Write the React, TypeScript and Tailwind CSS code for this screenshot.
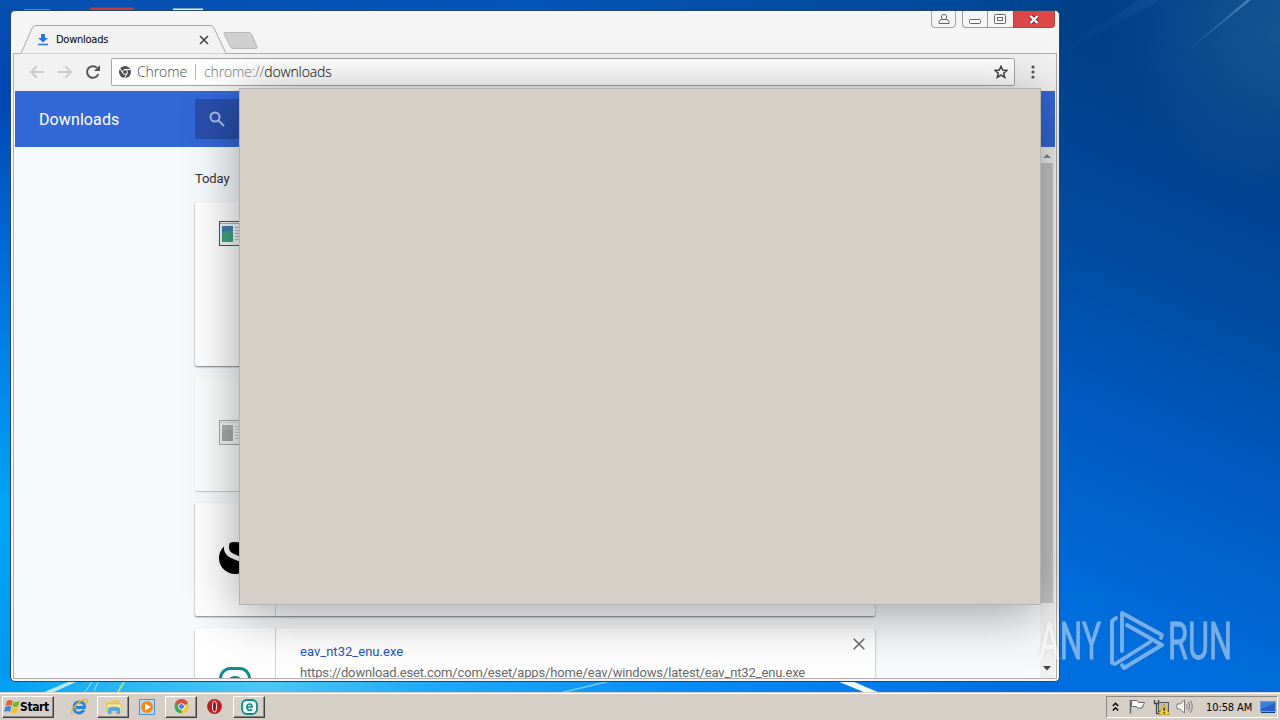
import type { ReactNode } from 'react';

/** Desktop wallpaper: blue gradients with a few light streaks */
function Wallpaper() {
  return (
    <svg className="absolute inset-0" width="1280" height="720" viewBox="0 0 1280 720">
      <defs>
        <linearGradient id="left" x1="0" y1="0" x2="0" y2="1">
          <stop offset="0" stopColor="#064fb0" />
          <stop offset="0.13" stopColor="#0046b2" />
          <stop offset="0.4" stopColor="#0073dc" />
          <stop offset="0.7" stopColor="#00a4f6" />
          <stop offset="1" stopColor="#0098f0" />
        </linearGradient>
        <linearGradient id="right" gradientUnits="userSpaceOnUse" x1="1050" y1="620" x2="1260" y2="130">
          <stop offset="0" stopColor="#006fe0" />
          <stop offset="0.35" stopColor="#005cc4" />
          <stop offset="0.7" stopColor="#004a9f" />
          <stop offset="1" stopColor="#004088" />
        </linearGradient>
        <linearGradient id="top" x1="0" y1="0" x2="1" y2="0">
          <stop offset="0" stopColor="#064fb0" />
          <stop offset="0.5" stopColor="#0455b8" />
          <stop offset="1" stopColor="#004490" />
        </linearGradient>
        <linearGradient id="bottom" x1="0" y1="0" x2="1" y2="0">
          <stop offset="0" stopColor="#009ff2" />
          <stop offset="0.12" stopColor="#2bb8f4" />
          <stop offset="0.25" stopColor="#4cc6f6" />
          <stop offset="0.4" stopColor="#1fabf8" />
          <stop offset="0.65" stopColor="#078cf6" />
          <stop offset="1" stopColor="#006bdf" />
        </linearGradient>
        <radialGradient id="haze" gradientUnits="userSpaceOnUse" cx="1280" cy="30" r="170">
          <stop offset="0" stopColor="#24619a" stopOpacity="0.6" />
          <stop offset="1" stopColor="#24619a" stopOpacity="0" />
        </radialGradient>
        <linearGradient id="streak" x1="1" y1="0" x2="0" y2="1">
          <stop offset="0" stopColor="#4f86bd" stopOpacity="0.9" />
          <stop offset="1" stopColor="#4f86bd" stopOpacity="0" />
        </linearGradient>
      </defs>
      <rect width="1280" height="720" fill="url(#right)" />
      <rect width="1059" height="30" fill="url(#top)" />
      <rect width="20" height="720" fill="url(#left)" />
      <rect y="681" width="1059" height="39" fill="url(#bottom)" />
      <rect x="1060" width="220" height="220" fill="url(#haze)" />
      <path d="M1249 -2 L1176 60 L1251 0Z" fill="url(#streak)" />
      <path d="M1140 0 L1062 48 V54 L1160 0Z" fill="url(#streak)" opacity="0.15" />
      <path d="M44 692 L68 682 H76 L54 692Z" fill="#b9e8f8" />
      <path d="M85 692 L92 682 M94 691 L98 682" stroke="#a9e2f8" />
      <path d="M118 692 L124 682" stroke="#a5e08c" strokeWidth="2" />
      <path d="M560 693 L610 681" stroke="#6ecbfc" strokeWidth="1.5" />
      <path d="M837 681 H852 L880 693 H866Z" fill="#eefaff" />
      <path d="M24 9.500H50" stroke="#5483c6" />
      <path d="M90 9H134" stroke="#c33b35" strokeWidth="3" />
      <path d="M173 9.500H203" stroke="#e6eef8" strokeWidth="2" />
    </svg>
  );
}

function ChromeTab() {
  return (
    <div className="relative z-10 ml-[10px] mt-[14px] h-[29px] w-[206px]">
      <svg className="absolute inset-0" width="206" height="29" viewBox="0 0 206 29">
        <path d="M0 28.500L11 3.500Q12 .5 15 .5H190Q192 .5 193 3L205 28.500Z" fill="#f2f2f2" />
        <path d="M0 28.500L11 3.500Q12 .5 15 .5H190Q192 .5 193 3L205 28.500" fill="none" stroke="#a8a8a8" />
      </svg>
      <div className="relative flex h-full items-center pl-[16px] pr-[18px]">
        <svg className="mt-[-1px]" width="12" height="13" viewBox="0 0 12 13">
          <path d="M4 1H8V5H11L6 9.500L1 5H4Z" fill="#2f72e4" />
          <path d="M1 11.500H11" stroke="#2f72e4" strokeWidth="1.500" />
        </svg>
        <span className="ml-[7px] font-['DejaVu_Sans_Condensed','DejaVu_Sans',sans-serif] text-[11px] leading-none tracking-[-0.25px] text-black">
          Downloads
        </span>
        <svg className="ml-auto mt-px" width="10" height="10" viewBox="0 0 10 10">
          <path d="M1 1L9 9M9 1L1 9" stroke="#444" strokeWidth="1.600" />
        </svg>
      </div>
    </div>
  );
}

function WindowControls() {
  return (
    <div className="mr-[4px] ml-auto flex h-[17px]">
      <div className="mr-[6px] flex w-[25px] items-center justify-center rounded-b border border-t-0 border-[#a6a6a6]">
        <svg width="12" height="12" viewBox="0 0 12 12" fill="#fff" stroke="#666">
          <path d="M1 10.500V8.500Q1.500 6.500 4 6.500H8Q10.500 6.500 11 8.500V10.500Z" />
          <circle cx="6" cy="4" r="2.600" />
        </svg>
      </div>
      <div className="flex w-[51px] rounded-bl border border-t-0 border-r-0 border-[#999]">
        <div className="flex w-[25px] items-center justify-center border-r border-[#999] pt-[5px]">
          <svg width="12" height="5" viewBox="0 0 12 5">
            <rect x=".5" y=".5" width="11" height="4" rx="1" fill="#fff" stroke="#666" />
          </svg>
        </div>
        <div className="flex flex-1 items-center justify-center pr-px">
          <svg width="12" height="10" viewBox="0 0 12 10" fill="#fff" stroke="#666">
            <rect x=".5" y=".5" width="11" height="9" rx="1" />
            <rect x="3.500" y="3.500" width="5" height="3" />
          </svg>
        </div>
      </div>
      <div className="flex w-[42px] items-center justify-center rounded-br border border-t-0 border-[#b54343] bg-[#dc4747] pr-px">
        <svg width="12" height="11" viewBox="0 0 12 11">
          <path d="M2.500 2L9.500 9M9.500 2L2.500 9" stroke="#7b2b2b" strokeWidth="4" />
          <path d="M2.500 2L9.500 9M9.500 2L2.500 9" stroke="#fff" strokeWidth="2.400" />
        </svg>
      </div>
    </div>
  );
}

function Toolbar() {
  return (
    <div className="flex h-[37px] shrink-0 items-center bg-[#f2f2f2] pr-[15px] pb-[2px] pl-[15px]">
      <svg width="16" height="16" viewBox="0 0 16 16" fill="none" stroke="#cbcbcb" strokeWidth="1.800">
        <path d="M15 8H2M8 2L2 8L8 14" />
      </svg>
      <svg className="ml-[12px]" width="16" height="16" viewBox="0 0 16 16" fill="none" stroke="#cbcbcb" strokeWidth="1.800">
        <path d="M1 8H14M8 2L14 8L8 14" />
      </svg>
      <svg className="ml-[12px]" width="16" height="16" viewBox="0 0 16 16">
        <path d="M13.300 10A5.800 5.800 0 1 1 12 3.900" fill="none" stroke="#555" strokeWidth="2" />
        <path d="M15 1V7H9Z" fill="#555" />
      </svg>
      <div className="ml-[10px] flex h-[28px] w-[904px] items-center rounded-[2px] border border-[#a3a3a3] bg-white pr-[6px] pl-[7px] font-['Open_Sans',sans-serif] text-[14px] leading-none">
        <svg width="12" height="12" viewBox="0 0 12 12">
          <circle cx="6" cy="6" r="6" fill="#505050" />
          <path d="M6 3.500H11.500M3.800 7.200L1 2.600M8.200 7.200L5.600 12" stroke="#fff" />
          <circle cx="6" cy="6" r="2.400" fill="#505050" stroke="#fff" />
        </svg>
        <span className="ml-[6px] w-[50px] tracking-[-0.1px] text-[#4a4a4a] font-light">Chrome</span>
        <span className="ml-[8px] h-[16px] w-px bg-[#b4b4b4]" />
        <span className="ml-[8px] font-light tracking-[-0.14px] text-[#757575]">
          chrome://<span className="text-black">downloads</span>
        </span>
        <svg className="ml-auto" width="14" height="14" viewBox="0 0 14 14">
          <path
            d="M7 1.300L8.700 5.100L12.900 5.500L9.700 8.300L10.700 12.400L7 10.200L3.300 12.400L4.300 8.300L1.100 5.500L5.300 5.100Z"
            fill="none"
            stroke="#444"
            strokeWidth="1.500"
          />
        </svg>
      </div>
      <svg className="ml-[16px]" width="4" height="14" viewBox="0 0 4 14" fill="#555">
        <circle cx="2" cy="2" r="1.600" />
        <circle cx="2" cy="7" r="1.600" />
        <circle cx="2" cy="12" r="1.600" />
      </svg>
    </div>
  );
}

function Thumbnail({ faded }: { faded?: boolean }) {
  const frame = faded ? '#a8a8a8' : '#4a5358';
  return (
    <svg width="32" height="26" viewBox="0 0 32 26">
      <rect x=".5" y=".5" width="31" height="24" fill="#f4f8f8" stroke={frame} />
      <path d="M1 2.500H31" stroke={faded ? '#ddd' : '#a9b3b8'} />
      <rect x="3" y="5" width="11" height="16" fill={faded ? '#b3b3b3' : '#3f7fae'} />
      <path d="M3 13Q8 8 14 10V21H3Z" fill={faded ? '#a9a9a9' : '#3fa27e'} />
      <path d="M16 6.500H29M16 9.500H29M16 12.500H29M16 15.500H29M16 18.500H29" stroke={faded ? '#ccc' : '#b8b8b8'} />
    </svg>
  );
}

function Card({ className, icon, children }: { className: string; icon: ReactNode; children?: ReactNode }) {
  return (
    <div className={`flex w-[680px] shrink-0 rounded-[2px] ${className}`}>
      <div className="flex w-[81px] border-r border-[#d6d6d6] pl-[24px]">{icon}</div>
      {children}
    </div>
  );
}

function DownloadsPage() {
  return (
    <div className="mx-px flex min-h-0 flex-1 flex-col overflow-hidden font-[Roboto,sans-serif]">
      {/* Page header */}
      <div className="flex h-[56px] shrink-0 items-center bg-[#3367d6] pl-[24px]">
        <span className="w-[156px] pt-[2px] text-[16px] tracking-[0.1px] text-white">Downloads</span>
        <div className="flex h-[40px] w-[680px] items-center rounded-[2px] bg-[#294fab] pl-[14px]">
          <svg width="16" height="16" viewBox="0 0 16 16" fill="none" stroke="#a9bfec" strokeWidth="2">
            <circle cx="6" cy="6" r="4.500" />
            <path d="M9.500 9.500L15 15" />
          </svg>
        </div>
      </div>

      <div className="flex min-h-0 flex-1">
        {/* Download list */}
        <div className="flex flex-1 flex-col gap-[12px] overflow-hidden bg-[#f7fafc] pl-[180px]">
          <div className="mb-[-12px] h-[55px] shrink-0 pt-[22px] text-[13px] leading-[20px] tracking-[-0.1px] text-[#333]">Today</div>
          <Card
            className="h-[164px] bg-white pt-[19px] shadow-[0_1px_2px_rgba(0,0,0,0.5)]"
            icon={<Thumbnail />}
          />
          <Card
            className="h-[113px] bg-[#fbfefd] pt-[42px] shadow-[0_1px_1px_rgba(0,0,0,0.22)]"
            icon={<Thumbnail faded />}
          />
          <Card
            className="h-[113px] bg-white shadow-[0_1px_2px_rgba(0,0,0,0.5)]"
            icon={
              <svg className="mt-[38px]" width="33" height="33" viewBox="0 0 33 33">
                <circle cx="16" cy="17" r="16" fill="#000" />
                <path d="M5 5L11 0L10 5Q9 10 15 13L24 17V22L12 17Q4 13 5 5Z" fill="#fff" />
              </svg>
            }
          />
          <Card
            className="h-[113px] bg-white shadow-[0_1px_2px_rgba(0,0,0,0.5)]"
            icon={
              <svg className="mt-[39px]" width="32" height="32" viewBox="0 0 32 32">
                <rect x="1.500" y="1.500" width="29" height="29" rx="10" fill="#fff" stroke="#12898b" strokeWidth="3" />
                <path d="M22 22Q10 28 10 17Q10 10.500 16 10.500Q22 10.500 22 17H11" fill="none" stroke="#12898b" strokeWidth="3" />
              </svg>
            }
          >
            <div className="flex flex-1 justify-between pt-[14px] pr-[10px] pl-[24px] text-[13px] leading-[19px]">
              <div className="flex flex-col gap-[2px]">
                <span className="tracking-[0.03px] text-[#2257cc]">eav_nt32_enu.exe</span>
                <span className="tracking-[-0.15px] text-[#6a6a6a]">
                  https://download.eset.com/com/eset/apps/home/eav/windows/latest/eav_nt32_enu.exe
                </span>
              </div>
              <svg className="mt-[-4px]" width="12" height="12" viewBox="0 0 12 12">
                <path d="M.7 .7L11.300 11.300M11.300 .7L.7 11.300" stroke="#666" strokeWidth="1.500" />
              </svg>
            </div>
          </Card>
        </div>

        {/* Scrollbar */}
        <div className="flex w-[15px] flex-col items-center bg-[#f1f1f1]">
          <svg className="shrink-0" width="15" height="16" viewBox="0 0 15 16">
            <path d="M3 11L7 7L11 11Z" fill="#8b8b8b" />
          </svg>
          <div className="mr-[2px] h-[440px] w-[13px] shrink-0 bg-[#c8c8c8]" />
          <svg className="mt-auto shrink-0" width="15" height="17" viewBox="0 0 15 17">
            <path d="M3 5L7 9.500L11 5Z" fill="#444" />
          </svg>
        </div>
      </div>
    </div>
  );
}

function BrowserWindow() {
  return (
    <div className="absolute top-[10px] left-[10px] flex h-[672px] w-[1050px] flex-col overflow-hidden rounded-[5px] border border-[#23466c] bg-[#f5f5f5]">
      {/* Tab strip */}
      <div className="flex h-[42px] shrink-0">
        <ChromeTab />
        <svg className="mt-[20px] ml-[-5px]" width="37" height="19" viewBox="0 0 37 19">
          <path d="M3 1.500H27Q29 1.500 30 4L35 16Q35.500 17.500 33 17.500H11Q9 17.500 8 15L2 3Q1.500 1.500 3 1.500Z" fill="#d0d0d0" stroke="#b8b8b8" />
        </svg>
        <WindowControls />
      </div>
      <div className="mx-[2px] mb-[2px] flex min-h-0 flex-1 flex-col border border-[#b3adad] bg-[#fafafa]">
        <Toolbar />
        <DownloadsPage />
      </div>
      {/* Blank dialog covering the page */}
      <div className="absolute top-[77px] left-[228px] h-[517px] w-[802px] border border-[#b2b4b2] bg-[#d6cfc8] shadow-[0_8px_50px_rgba(0,0,0,0.38)]" />
    </div>
  );
}

function Watermark() {
  return (
    <svg
      className="absolute top-[600px] left-[1030px] overflow-visible drop-shadow-[0_0_2px_rgba(90,90,90,0.35)]"
      width="210"
      height="80"
      viewBox="1030 600 210 80"
      opacity="0.46"
    >
      <g fill="#fff" fontFamily="Roboto, sans-serif" fontSize="51" stroke="#fff" strokeWidth=".8">
        <text x="1039" y="659" textLength="62" lengthAdjust="spacingAndGlyphs">ANY</text>
        <text x="1168" y="659" textLength="64" lengthAdjust="spacingAndGlyphs">RUN</text>
      </g>
      <g fill="none" stroke="#fff" strokeWidth="3.800" strokeLinejoin="round" strokeLinecap="round">
        <path d="M1122 651V613L1162 635L1161 638" />
        <path d="M1116 618L1112 621V663L1115 664L1150 642" />
        <path d="M1127 625L1162 645L1124 668L1122 665" />
      </g>
    </svg>
  );
}

function TaskButton({ children }: { children: ReactNode }) {
  return (
    <div className="flex h-[22px] w-[32px] items-center justify-center border border-t-white border-r-[#404040] border-b-[#404040] border-l-white bg-[#d8d2cb] shadow-[inset_-1px_-1px_0_#8c8780]">
      {children}
    </div>
  );
}

function Taskbar() {
  return (
    <div className="relative flex h-[28px] items-center border-t border-[#d6cfc8] bg-[#d6cfc8] pr-[2px] pl-[2px] shadow-[inset_0_1px_0_#fff] font-['DejaVu_Sans_Condensed','DejaVu_Sans',sans-serif] text-[11px] leading-none text-black">
      <div className="flex h-[22px] w-[52px] items-center border border-t-white border-r-[#404040] border-b-[#404040] border-l-white pl-[1px] shadow-[inset_-1px_-1px_0_#8c8780]">
        <svg width="16" height="15" viewBox="0 0 16 15">
          <path d="M3 2Q6 0 8.500 2L7.500 7Q5 5 1.500 7Z" fill="#e5602a" />
          <path d="M9.500 2.500Q12 4 15.500 2L14 7.500Q11 9 8.500 7Z" fill="#78b82a" />
          <path d="M1.300 8Q4.500 6 7.300 8L6 13Q3.500 11 0 13Z" fill="#3c86d9" />
          <path d="M8.300 8.500Q11 10 14 8.500L12.500 13.500Q9.500 15 7 13Z" fill="#f6c22c" />
        </svg>
        <span className="text-[12px] font-bold tracking-[-0.4px]">Start</span>
      </div>

      {/* Pinned and running programs */}
      <svg className="ml-[17px]" width="17" height="17" viewBox="0 0 17 17">
        <path d="M13 12Q11 15 8 15Q3 15 3 9.500Q3 4 8.500 4Q14 4 13.500 9.500H5" fill="none" stroke="#2686d9" strokeWidth="2.800" />
        <path d="M1 16Q-1 13 6 6Q13 0 16 2Q17 3 15 6" fill="none" stroke="#e6b821" strokeWidth="1.300" />
      </svg>
      <div className="ml-[9px]">
        <TaskButton>
          <svg width="17" height="16" viewBox="0 0 17 16">
            <path d="M1 3H6L8 1H14L15 4V13H1Z" fill="#e9ca6b" />
            <path d="M2 5H16V13H2Z" fill="#f8e8a4" stroke="#d6b455" strokeWidth=".6" />
            <path d="M3 15V9Q9 6 15 9V15H11.500V12H6.500V15Z" fill="#59a9db" />
          </svg>
        </TaskButton>
      </div>
      <svg className="ml-[10px]" width="16" height="16" viewBox="0 0 16 16">
        <rect x=".5" y=".5" width="15" height="15" fill="#b7daf3" stroke="#4c94d0" />
        <circle cx="8" cy="8" r="6" fill="#f08a1d" />
        <path d="M6 4.500L12 8L6 11.500Z" fill="#fff" />
      </svg>
      <div className="ml-[10px]">
        <TaskButton>
          <svg width="15" height="15" viewBox="0 0 15 15">
            <circle cx="7.500" cy="7.500" r="7" fill="#48a756" />
            <path d="M7.500 7.500L1.200 4A7 7 0 0 1 14 4.500Z" fill="#df4b3d" />
            <path d="M7.500 7.500L14 4.500A7 7 0 0 1 7.500 14.500Z" fill="#f4cb3a" />
            <circle cx="7.500" cy="7.500" r="3" fill="#4a7fe6" stroke="#fff" />
          </svg>
        </TaskButton>
      </div>
      <svg className="ml-[10px]" width="15" height="15" viewBox="0 0 15 15">
        <circle cx="7.500" cy="7.500" r="7.400" fill="#bb1c1f" />
        <ellipse cx="7.500" cy="7.500" rx="2" ry="5.500" fill="#8d1114" stroke="#f3dada" strokeWidth="1.200" />
      </svg>
      <div className="ml-[11px]">
        <TaskButton>
          <svg width="17" height="16" viewBox="0 0 17 16">
            <rect x="1" y="1" width="15" height="14" rx="5" fill="#e8fafa" stroke="#12898b" strokeWidth="1.800" />
            <path d="M11 10.500Q8.500 12 6.800 10.500Q5.500 9 6 7Q6.600 5 8.500 5Q11 5 11 8H6" fill="none" stroke="#12898b" strokeWidth="1.700" />
          </svg>
        </TaskButton>
      </div>

      {/* System tray */}
      <div className="ml-auto flex h-[22px] w-[172px] items-center border border-t-[#8c8780] border-r-white border-b-white border-l-[#8c8780] pl-[5px]">
        <svg width="7" height="10" viewBox="0 0 7 10" fill="none" stroke="#000" strokeWidth="1.400">
          <path d="M.8 4L3.500 1.300L6.200 4M.8 8.500L3.500 5.800L6.200 8.500" />
        </svg>
        <svg className="ml-[10px]" width="16" height="15" viewBox="0 0 16 15">
          <path d="M1.500 1V14.500" stroke="#666" strokeWidth="1.500" />
          <path d="M2.500 1.500H8L9.500 3.500H15.500L13 9H8.500L7.500 7.500H2.500Z" fill="#fff" stroke="#666" />
        </svg>
        <svg className="ml-[8px]" width="17" height="16" viewBox="0 0 17 16">
          <rect x="5.500" y="3.500" width="10" height="9" fill="#bcbcbc" stroke="#555" />
          <path d="M1.500 1V4.500H5.500V1M3.500 5V14.500H8" fill="none" stroke="#444" strokeWidth="1.300" />
          <path d="M11 5L16.500 15.500H6Z" fill="#f8d42a" stroke="#bd9310" strokeWidth=".7" />
          <path d="M11.200 8.500V12M11.200 13V14.500" stroke="#222" strokeWidth="1.300" />
        </svg>
        <svg className="ml-[6px]" width="17" height="15" viewBox="0 0 17 15" fill="none" stroke="#777">
          <path d="M1 5H4L8.500 1V14L4 10H1Z" fill="#fff" />
          <path d="M10.500 5Q12 7.500 10.500 10M12.500 3Q15 7.500 12.500 12M14.500 1.500Q18 7.500 14.500 13.500" />
        </svg>
        <span className="ml-[13px] w-[47px] pt-px tracking-[-0.1px] whitespace-nowrap">10:58 AM</span>
        <svg className="ml-[7px]" width="16" height="14" viewBox="0 0 16 14">
          <rect x=".5" y="1.500" width="15" height="10" fill="#2563c4" stroke="#6d9cde" />
          <path d="M1 9L15 3V2H1Z" fill="#3f7cdb" />
          <path d="M1 12.500H15" stroke="#123a83" />
        </svg>
      </div>
    </div>
  );
}

export default function App() {
  return (
    <div className="relative flex h-[720px] w-[1280px] flex-col overflow-hidden bg-[#005cc4]">
      <Wallpaper />
      {/* Desktop area */}
      <div className="relative flex-1">
        <BrowserWindow />
        <Watermark />
      </div>
      <Taskbar />
    </div>
  );
}
